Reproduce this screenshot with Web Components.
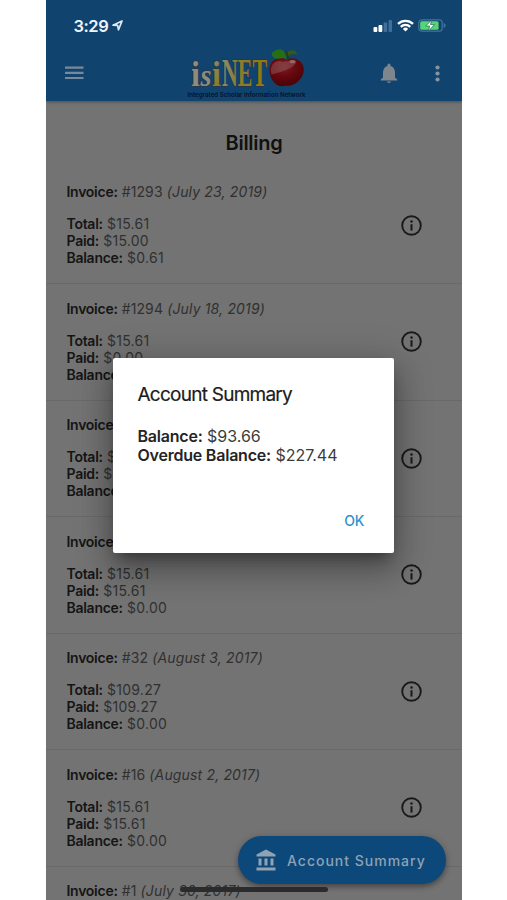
<!DOCTYPE html>
<html lang="en">
<head>
<meta charset="utf-8">
<title>Billing</title>
<style>
html,body{margin:0;height:100%;background:#fff;overflow:hidden}
body{font-family:Inter,"Liberation Sans",sans-serif}
</style>
</head>
<body>
<billing-app></billing-app>
<script>
const define = (name, html, setup) => {
  const t = document.createElement('template');
  t.innerHTML = html;
  customElements.define(name, class extends HTMLElement {
    constructor() {
      super();
      this.attachShadow({mode: 'open'}).append(t.content.cloneNode(true));
    }
    connectedCallback() { if (setup) setup(this, this.shadowRoot); }
  });
};

define('status-bar', `
<style>
:host{display:flex;height:45px;box-sizing:border-box;padding:6px 16px 0 27.5px;align-items:center;color:#eef5fa}
.time{font-size:16.5px;font-weight:600;letter-spacing:-.45px;line-height:20px}
svg{display:block}
.arrow{margin:0 0 0 3.500px}
.right{margin-left:auto;display:flex;align-items:center;gap:4px}
</style>
<span class="time">3:29</span>
<svg class="arrow" width="11" height="11" viewBox="0 0 11 11"><path d="M1 5.200 10 1 6.500 9.800 5.600 5.400Z" fill="none" stroke="#dce9f2" stroke-width="1.700" stroke-linejoin="round"/></svg>
<div class="right">
<svg width="20" height="13" viewBox="0 0 20 13"><rect x="0.5" y="8" width="3.8" height="5" rx="1" fill="#fff"/><rect x="5.5" y="6" width="3.8" height="7" rx="1" fill="#fff"/><rect x="10.6" y="3.5" width="3.6" height="9.5" rx="1" fill="#40709a"/><rect x="15.6" y="1" width="3.4" height="12" rx="1" fill="#40709a"/></svg>
<svg width="17" height="13" viewBox="0 0 17 13" fill="none" stroke="#fff" stroke-width="2.3"><path d="M1 4.9a10.6 10.6 0 0 1 15 0M3.8 7.9a6.7 6.7 0 0 1 9.4 0"/><path d="M8.5 12.5 5.9 9.9a3.7 3.7 0 0 1 5.2 0Z" fill="#fff" stroke="none"/></svg>
<svg width="28" height="13" viewBox="0 0 28 13"><rect x=".8" y=".8" width="23.4" height="11.4" rx="3" fill="none" stroke="#41739c" stroke-width="1.2"/><rect x="2.2" y="2.2" width="18.4" height="8.6" rx="1.6" fill="#55d576"/><path d="M25.6 4v5q2-.8 2-2.5t-2-2.5Z" fill="#41739c"/><path d="m13.7 1-6 6h4l-1.2 5 6-6.4h-4Z" fill="#fff" stroke="#17694b" stroke-width=".7"/></svg>
</div>`);

define('brand-logo', `
<style>:host{display:block;width:124px;height:56px}svg{display:block}</style>
<svg width="124" height="56" viewBox="0 0 124 56">
<defs>
<linearGradient id="g" x1="0" y1="0" x2="0" y2="1"><stop offset="0" stop-color="#85866f"/><stop offset=".5" stop-color="#8b8140"/><stop offset="1" stop-color="#967709"/></linearGradient>
<linearGradient id="n"><stop offset="0" stop-color="#8b8b70"/><stop offset=".35" stop-color="#8b7c33"/><stop offset="1" stop-color="#967709"/></linearGradient>
<radialGradient id="a" cx=".42" cy=".3" r=".75"><stop offset="0" stop-color="#7c2028"/><stop offset=".45" stop-color="#68080f"/><stop offset="1" stop-color="#450306"/></radialGradient>
</defs>
<g font-family="'Liberation Serif',serif" font-weight="700" stroke="#26364a" stroke-width="1.6" paint-order="stroke">
<text x="5" y="41" font-size="35" textLength="9" lengthAdjust="spacingAndGlyphs" fill="#8e8d7c">i</text>
<text x="14.500" y="41" font-size="32" font-style="italic" textLength="11" lengthAdjust="spacingAndGlyphs" fill="#8e8d7c">s</text>
<text x="26" y="41" font-size="35" textLength="9" lengthAdjust="spacingAndGlyphs" fill="url(#g)">i</text>
<text x="36" y="41" font-size="39" textLength="45" lengthAdjust="spacingAndGlyphs" fill="url(#n)">NET</text>
</g>
<g transform="translate(-1 1.500)">
<path d="M101 13c-5-3-13-1-15.500 5-3.500 9 2.500 20 9.500 21.500 3 .5 4-.5 7-.3 7 .6 14.500-5.200 16.500-13.200C121 16 110 9 101 13Z" fill="url(#a)"/>
<path d="M86.500 28c-3-9 4-15 10-13 4 1 7-2 15 0-2 6-10 9-25 13Z" fill="#946363" opacity=".45"/>
<path d="M102 14c-1-3-4-3-7-2-5 1-8-1-8.500-5C90 3 96 1.500 99 5c1 2 2 5 3 9Z" fill="#267014"/>
<path d="M102 11c-2-5 2-8 7-7 2 1 3 2 3 4-3-1-7-1-10 3Z" fill="#365915"/>
<path d="M101 5q2 3 2 9" stroke="#273b12" stroke-width="1.500" fill="none"/>
<ellipse cx="107.500" cy="15" rx="3" ry="1.800" fill="#a67b7b" opacity=".7"/>
</g>
<text x="1.500" y="52" font-family="Inter,sans-serif" font-size="6.800" font-weight="600" textLength="118" lengthAdjust="spacingAndGlyphs" fill="#03142c">Integrated Scholar Information Network</text>
</svg>`);

define('app-bar', `
<style>
:host{display:block;height:101px;background:#10446f;box-shadow:0 1px 3px rgba(0,0,0,.35);position:relative}
.tools{display:grid;grid-template-columns:140px 124px 1fr;height:56px;align-items:center}
.menu{padding-left:18.500px}
.actions{display:flex;justify-content:flex-end;gap:37px;padding-right:22px;align-items:center}
svg{display:block}
brand-logo{align-self:start}
</style>
<status-bar></status-bar>
<div class="tools">
<div class="menu"><svg width="19" height="14" viewBox="0 0 19 14" fill="#778a9a"><path d="M0 .5h18.500v2.200H0zM0 5.700h18.500v2.200H0zM0 10.900h18.500v2.200H0z"/></svg></div>
<brand-logo></brand-logo>
<div class="actions">
<svg width="18" height="20" viewBox="0 0 18 20" fill="#7e868d"><path d="M9 20c1.200 0 2.100-.8 2.100-1.500H6.900C6.900 19.200 7.800 20 9 20Zm6-5.500V9.300c0-3.200-1.700-5.700-4.500-6.400v-.8a1.500 1.500 0 0 0-3 0v.8C4.700 3.600 3 6.100 3 9.300v5.200L.8 16.400v1h16.400v-1Z"/></svg>
<svg width="5" height="17" viewBox="0 0 5 17" fill="#8395a4"><circle cx="2.500" cy="2.500" r="2.100"/><circle cx="2.500" cy="8.500" r="2.100"/><circle cx="2.500" cy="14.500" r="2.100"/></svg>
</div>
</div>`);

define('invoice-row', `
<style>
:host{display:grid;grid-template-columns:1fr auto;align-items:center;height:116.500px;box-sizing:border-box;padding:0 40px 0 20.500px;border-bottom:1px solid #696969;font-size:14px;line-height:17px;color:#303030}
.text{align-self:start;padding-top:15.500px;white-space:nowrap}
p{margin:0}
.head{margin-bottom:15px;letter-spacing:.12px}
b{font-weight:600;color:#151515;letter-spacing:-.27px}
i{letter-spacing:.16px}
svg{display:block}
.sums{letter-spacing:.27px}
</style>
<div class="text">
<p class="head"><b>Invoice:</b> <span class="no"></span> <i></i></p>
<div class="sums">
<p><b>Total:</b> <span class="total"></span></p>
<p><b>Paid:</b> <span class="paid"></span></p>
<p><b>Balance:</b> <span class="balance"></span></p>
</div>
</div>
<svg width="21" height="21" viewBox="0 0 21 21"><circle cx="10.500" cy="10.500" r="9.300" fill="none" stroke="#191919" stroke-width="1.900"/><circle cx="10.500" cy="6.400" r="1.250" fill="#191919"/><path d="M9.500 9.200h2v6.400h-2z" fill="#191919"/></svg>`,
(el, r) => {
  for (const k of ['no', 'total', 'paid', 'balance']) r.querySelector('.' + k).textContent = el.getAttribute(k) || '';
  r.querySelector('i').textContent = el.getAttribute('date') || '';
  if (!el.hasAttribute('total')) r.querySelector('.sums').remove();
});

define('summary-button', `
<style>
:host{display:flex;align-items:center;width:208px;height:48px;box-sizing:border-box;padding-left:18px;gap:11px;border-radius:24px;background:#0d487b;color:#8ea2b4;box-shadow:0 3px 5px rgba(0,0,0,.3),0 1px 9px rgba(0,0,0,.14);font-size:14px;font-weight:500;letter-spacing:1px;white-space:nowrap}
svg{display:block;flex:none}
</style>
<svg width="20" height="22" viewBox="0 0 20 22" fill="#91a2b1"><path d="M10 .5 19.500 5.500v2H.5v-2ZM2.500 9.500h3v7h-3zM8.500 9.500h3v7h-3zM14.500 9.500h3v7h-3zM.5 18.500h19v3H.5z"/></svg>
<slot></slot>`);

define('alert-dialog', `
<style>
:host{display:flex;flex-direction:column;box-sizing:border-box;width:281px;height:195px;padding:25px 24.500px 20.500px;background:#fff;border-radius:2px;box-shadow:0 9px 13px -5px rgba(0,0,0,.35),0 18px 30px 2px rgba(0,0,0,.2),0 6px 36px 6px rgba(0,0,0,.16)}
h2{margin:0;font-size:19px;font-weight:400;line-height:24px;letter-spacing:-.75px;color:#1c1c1c;-webkit-text-stroke:.2px #1c1c1c}
.body{margin-top:20px;font-size:16px;line-height:19px;color:#3c3c3c;white-space:nowrap}
.foot{margin-top:auto;display:flex;justify-content:flex-end;padding-right:5px;font-size:14px;line-height:24px;font-weight:500;color:#2f93ca}
</style>
<h2><slot name="title"></slot></h2>
<div class="body"><slot></slot></div>
<div class="foot"><slot name="action"></slot></div>`);

define('billing-app', `
<style>
:host{display:block;position:relative;width:416px;height:900px;margin-left:46px;background:#737373;overflow:hidden}
h1{margin:0;padding-top:29px;height:37.500px;font-size:20px;line-height:27px;font-weight:600;letter-spacing:-.3px;text-align:center;color:#111}
alert-dialog{position:absolute;left:67px;top:358px}
summary-button{position:absolute;left:192px;top:836px}
.home{position:absolute;left:134px;top:887px;width:148px;height:5px;border-radius:3px;background:#2b2b2b}
alert-dialog b{font-weight:600;color:#242424;letter-spacing:-.22px}
</style>
<app-bar></app-bar>
<h1>Billing</h1>
<invoice-row no="#1293" date="(July 23, 2019)" total="$15.61" paid="$15.00" balance="$0.61"></invoice-row>
<invoice-row no="#1294" date="(July 18, 2019)" total="$15.61" paid="$0.00"></invoice-row>
<invoice-row total="$" paid="$"></invoice-row>
<invoice-row total="$15.61" paid="$15.61" balance="$0.00"></invoice-row>
<invoice-row no="#32" date="(August 3, 2017)" total="$109.27" paid="$109.27" balance="$0.00"></invoice-row>
<invoice-row no="#16" date="(August 2, 2017)" total="$15.61" paid="$15.61" balance="$0.00"></invoice-row>
<invoice-row no="#1" date="(July 30, 2017)"></invoice-row>
<summary-button>Account Summary</summary-button>
<div class="home"></div>
<alert-dialog><span slot="title">Account Summary</span><div><b>Balance:</b> $93.66</div><div><b>Overdue Balance:</b> $227.44</div><span slot="action">OK</span></alert-dialog>`);
</script>
</body>
</html>
